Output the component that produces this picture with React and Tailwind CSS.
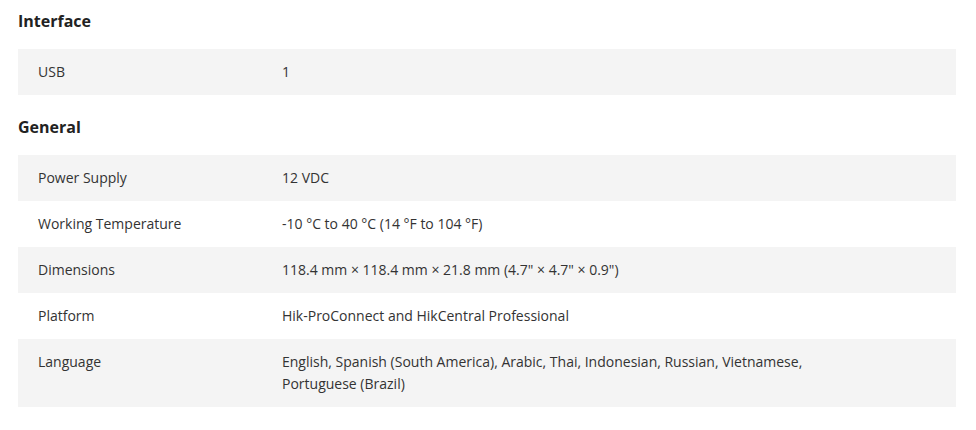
export default function App() {
  const sections = [
    { title: "Interface", rows: [["USB", "1"]] },
    {
      title: "General",
      rows: [
        ["Power Supply", "12 VDC"],
        ["Working Temperature", "-10 °C to 40 °C (14 °F to 104 °F)"],
        ["Dimensions", "118.4 mm × 118.4 mm × 21.8 mm (4.7\" × 4.7\" × 0.9\")"],
        ["Platform", "Hik-ProConnect and HikCentral Professional"],
        [
          "Language",
          "English, Spanish (South America), Arabic, Thai, Indonesian, Russian, Vietnamese, Portuguese (Brazil)",
        ],
      ],
    },
  ];
  return (
    <div
      className="w-[976px] h-[430px] bg-white pt-[9px] px-[18px] text-[#333]"
      style={{ fontFamily: "'Open Sans', 'Noto Sans', sans-serif" }}
    >
      {sections.map((s, si) => (
        <div key={s.title} className={si > 0 ? "mt-[20px]" : ""}>
          <h2 className="text-[16px] leading-[24px] font-bold text-[#222] mb-[16px]">
            {s.title}
          </h2>
          <div className="w-[938px]">
            {s.rows.map((r, i) => (
              <div
                key={r[0]}
                className={`flex text-[14px] leading-[22px] py-[12px] ${
                  i % 2 === 0 ? "bg-[#f4f4f4]" : "bg-white"
                }`}
              >
                <div className="w-[264px] pl-[20px] shrink-0">{r[0]}</div>
                <div className="w-[540px]">{r[1]}</div>
              </div>
            ))}
          </div>
        </div>
      ))}
    </div>
  );
}
